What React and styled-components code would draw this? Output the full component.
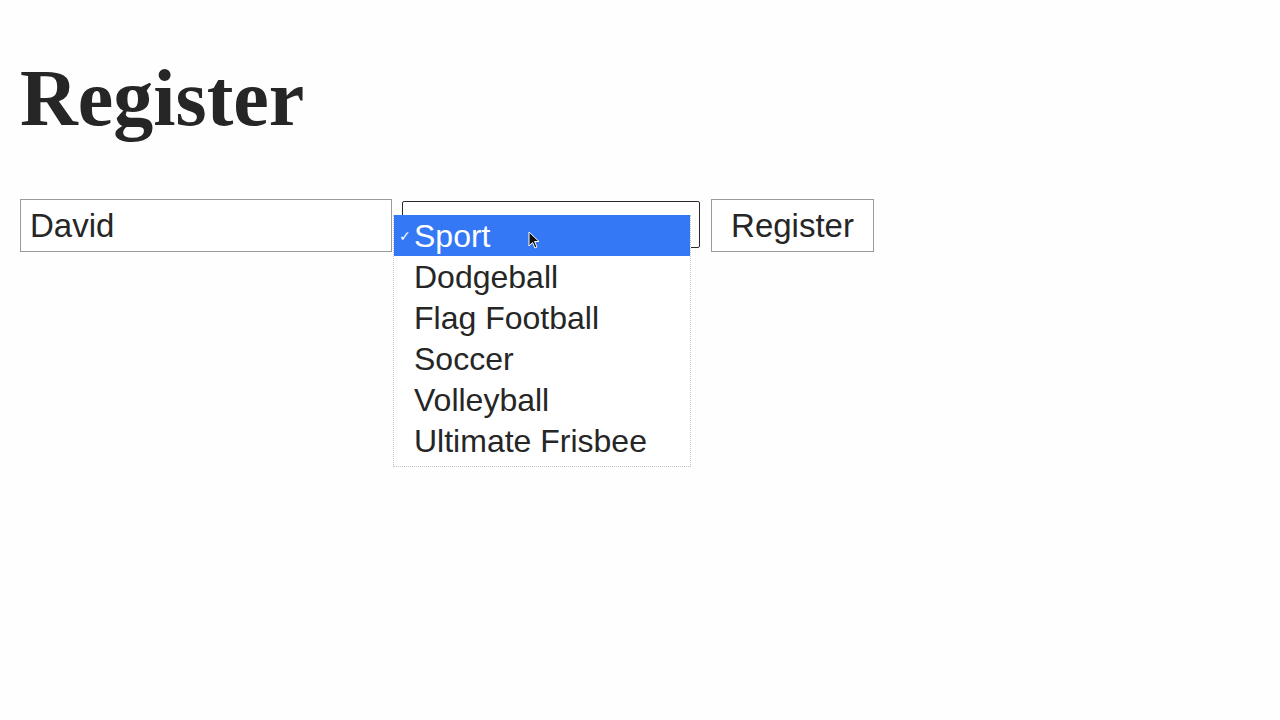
import styled, { createGlobalStyle } from 'styled-components';

const GlobalStyle = createGlobalStyle`
  body {
    margin: 0;
    background: #fefefe;
    color: #262626;
    font-family: "Liberation Sans", Arial, sans-serif;
  }
`;

const Page = styled.div`
  padding: 0 20px;
`;

const Title = styled.h1`
  margin: 0;
  padding-top: 53px;
  font-family: "Liberation Serif", "Times New Roman", serif;
  font-size: 80px;
  line-height: 90px;
  font-weight: bold;
  color: #262626;
`;

const Form = styled.form`
  display: flex;
  align-items: flex-start;
  gap: 10px;
  margin-top: 56px;
`;

const NameInput = styled.input`
  box-sizing: border-box;
  width: 372px;
  height: 53px;
  padding: 0 9px;
  border: 1px solid #9a9a9a;
  font-family: "Liberation Sans", Arial, sans-serif;
  font-size: 33px;
  color: #262626;
  background: #fff;
  outline: none;
`;

const SelectWrap = styled.div`
  display: grid;
  margin-top: 2px;
  width: 298px;
`;

const SelectBox = styled.div`
  grid-area: 1 / 1;
  box-sizing: border-box;
  width: 100%;
  height: 47px;
  border: 1px solid #2a2a2a;
  border-radius: 2px;
  background: #fff;
`;

const Menu = styled.ul`
  grid-area: 1 / 1;
  position: relative;
  z-index: 1;
  width: 298px;
  margin: 14px 0 0 -9px;
  padding: 0 0 5px;
  list-style: none;
  background: #fff;
  border: 1px dotted #c4c4c4;
  border-top: none;
  box-sizing: border-box;
`;

const Option = styled.li`
  position: relative;
  height: 39px;
  padding-top: 2px;
  line-height: 39px;
  padding-left: 20px;
  font-family: "Liberation Sans", Arial, sans-serif;
  font-size: 32px;
  color: ${({ $active }) => ($active ? '#fff' : '#262626')};
  background: ${({ $active }) => ($active ? '#3478f6' : 'transparent')};
  white-space: nowrap;
`;

const Check = styled.span`
  position: absolute;
  left: 5px;
  top: 2px;
  font-size: 14px;
  color: #fff;
`;

const Cursor = styled.svg`
  position: absolute;
  left: 134px;
  top: 16px;
`;

const SubmitButton = styled.button`
  box-sizing: border-box;
  width: 163px;
  height: 53px;
  margin-left: 1px;
  padding: 0;
  border: 1px solid #9a9a9a;
  background: #fff;
  font-family: "Liberation Sans", Arial, sans-serif;
  font-size: 33px;
  color: #262626;
`;

const sports = ['Sport', 'Dodgeball', 'Flag Football', 'Soccer', 'Volleyball', 'Ultimate Frisbee'];

export default function App() {
  return (
    <Page>
      <GlobalStyle />
      <Title>Register</Title>
      <Form onSubmit={(e) => e.preventDefault()}>
        <NameInput defaultValue="David" />
        <SelectWrap>
          <SelectBox />
          <Menu>
            {sports.map((s, i) => (
              <Option key={s} $active={i === 0}>
                {i === 0 && <Check>✓</Check>}
                {s}
                {i === 0 && (
                  <Cursor width="12" height="18" viewBox="0 0 12 18">
                    <path d="M1 1 L1 15 L4.5 11.5 L7 17 L9 16 L6.5 10.5 L11 10.5 Z" fill="#111" stroke="#fff" strokeWidth="1" />
                  </Cursor>
                )}
              </Option>
            ))}
          </Menu>
        </SelectWrap>
        <SubmitButton type="submit">Register</SubmitButton>
      </Form>
    </Page>
  );
}
